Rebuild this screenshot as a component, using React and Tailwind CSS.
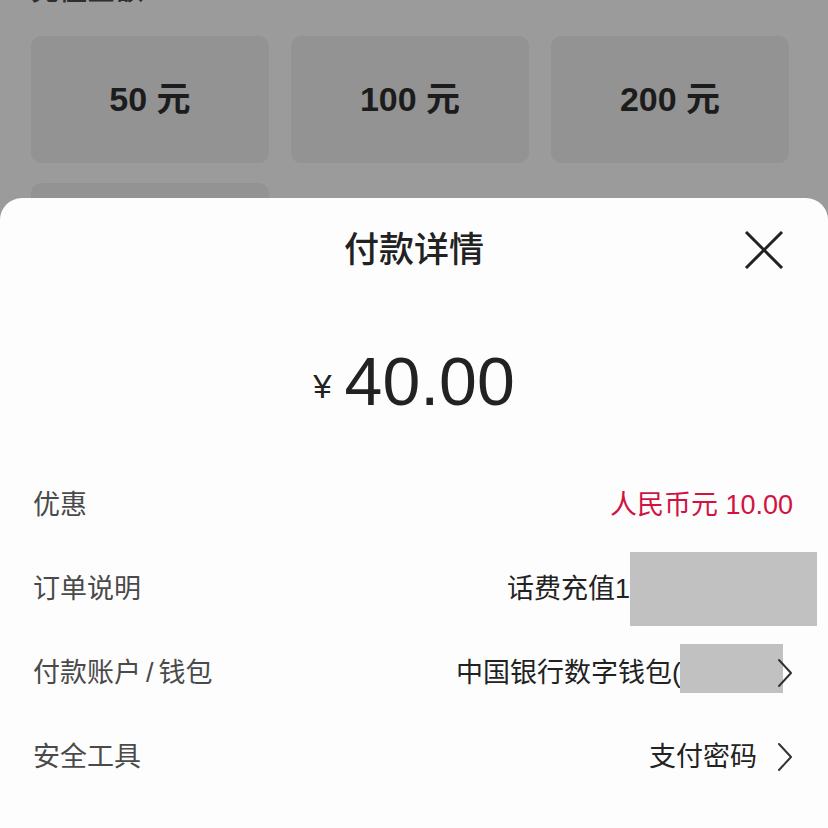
import React from "react";

const font = { fontFamily: '"Liberation Sans", "Noto Sans CJK SC", sans-serif' };

const Chevron = () => (
  <svg width="16" height="30" viewBox="0 0 16 30" fill="none" className="shrink-0">
    <path d="M2 2 L14 15 L2 28" stroke="#333" strokeWidth="2" strokeLinecap="round" strokeLinejoin="round" />
  </svg>
);

const Row = ({ label, children }) => (
  <div className="flex items-center justify-between h-[84px] pl-[33px] pr-[35px]">
    <span className="text-[27px] text-[#4a4a4a]">{label}</span>
    <div className="flex items-center text-[27px] text-[#222]">{children}</div>
  </div>
);

const App = () => {
  const amounts = ["50 元", "100 元", "200 元", ""];

  return (
    <div
      className="relative w-[828px] h-[828px] overflow-hidden bg-[#9b9b9b]"
      style={font}
    >
      {/* page behind the sheet */}
      <div className="px-[31px]">
        <div className="-mt-[27px] mb-[27px] h-[36px] text-[28px] font-medium text-[#2e2e2e] leading-[36px]">
          充值金额
        </div>
        <div className="grid grid-cols-[238px_238px_238px] gap-x-[22px] gap-y-[20px]">
          {amounts.map((a, i) => (
            <div
              key={i}
              className="h-[127px] rounded-[10px] bg-[#939393] flex items-center justify-center text-[34px] font-bold text-[#1c1c1c]"
            >
              {a}
            </div>
          ))}
        </div>
      </div>

      {/* payment sheet */}
      <div className="absolute left-0 right-0 bottom-0 h-[630px] rounded-t-[22px] bg-[#fdfdfd]">
        <div className="relative flex items-center justify-center h-[104px]">
          <span className="text-[35px] font-medium text-[#222]">付款详情</span>
          <svg
            className="absolute right-[44px] top-[33px]"
            width="40"
            height="38"
            viewBox="0 0 40 38"
            fill="none"
          >
            <path d="M2 1 L38 37 M38 1 L2 37" stroke="#222" strokeWidth="3" />
          </svg>
        </div>

        <div className="flex items-end justify-center h-[114px] pb-[1px] text-[#222]">
          <span className="text-[33px] mr-[13px] mb-[4px]">¥</span>
          <span className="text-[68px] leading-none">40.00</span>
        </div>

        <div className="mt-[47px]">
          <Row label="优惠">
            <span className="text-[#d21342]">人民币元 10.00</span>
          </Row>
          <Row label="订单说明">
            <span>话费充值1</span>
            <div className="w-[187px] h-[74px] -mr-[24px] bg-[#c1c1c1]" />
          </Row>
          <Row
            label={
              <>
                付款账户<span className="mx-[5px]">/</span>钱包
              </>
            }
          >
            <span>中国银行数字钱包(</span>
            <div className="w-[103px] h-[49px] -ml-[1px] -mr-[6px] mb-[10px] bg-[#c1c1c1]" />
            <Chevron />
          </Row>
          <Row label="安全工具">
            <span className="mr-[20px]">支付密码</span>
            <Chevron />
          </Row>
        </div>
      </div>
    </div>
  );
};

export default App;
